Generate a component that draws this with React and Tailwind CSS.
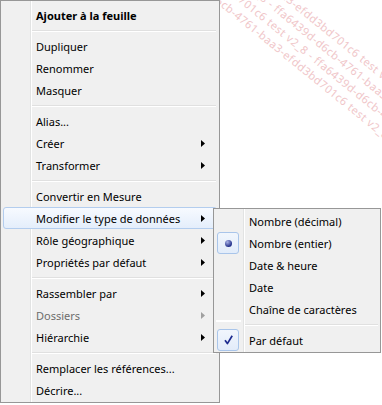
import React from 'react';

const font = { fontFamily: '"Segoe UI", "Noto Sans", sans-serif' };

const mainItems = [
  { label: 'Ajouter à la feuille', bold: true },
  { sep: true },
  { label: 'Dupliquer' },
  { label: 'Renommer' },
  { label: 'Masquer' },
  { sep: true },
  { label: 'Alias...' },
  { label: 'Créer', sub: true },
  { label: 'Transformer', sub: true },
  { sep: true },
  { label: 'Convertir en Mesure' },
  { label: 'Modifier le type de données', sub: true, active: true },
  { label: 'Rôle géographique', sub: true },
  { label: 'Propriétés par défaut', sub: true },
  { sep: true },
  { label: 'Rassembler par', sub: true },
  { label: 'Dossiers', sub: true, disabled: true },
  { label: 'Hiérarchie', sub: true },
  { sep: true },
  { label: 'Remplacer les références...' },
  { label: 'Décrire...' },
];

const subItems = [
  { label: 'Nombre (décimal)' },
  { label: 'Nombre (entier)', mark: 'radio' },
  { label: 'Date & heure' },
  { label: 'Date' },
  { label: 'Chaîne de caractères' },
  { sep: true },
  { label: 'Par défaut', mark: 'check' },
];

const Arrow = ({ disabled }) => (
  <svg width="4" height="7" viewBox="0 0 4 7" className="shrink-0">
    <polygon points="0,0 4,3.5 0,7" fill={disabled ? '#a0a0a0' : '#000'} />
  </svg>
);

const Gutter = () => (
  <div className="absolute left-[29px] top-0 bottom-0 w-[2px] border-l border-[#e2e3e3] bg-white" />
);

const MainMenu = () => (
  <div className="relative w-[220px] border border-[#979797] bg-[#f0f0f0] pt-[3px] pb-[1px]">
    <Gutter />
    {mainItems.map((it, i) =>
      it.sep ? (
        <div key={i} className="relative h-[9px] pt-[4px] pl-[31px] pr-[3px]">
          <div className="h-[2px] border-t border-[#e0e0e0] bg-white" />
        </div>
      ) : (
        <div
          key={i}
          className={
            'relative mx-[2px] flex h-[22px] items-center justify-between rounded-[3px] border pl-[32px] pr-[11px] ' +
            (it.active
              ? 'border-[#b3cdee] bg-gradient-to-b from-[#f7faff] to-[#e4eefb]'
              : 'border-transparent')
          }
        >
          <span
            className={
              (it.bold ? 'font-bold ' : '') +
              (it.disabled ? 'text-[#6d6d6d]' : 'text-black')
            }
          >
            {it.label}
          </span>
          {it.sub && <Arrow disabled={it.disabled} />}
        </div>
      )
    )}
  </div>
);

const Mark = ({ type }) => {
  if (!type) return <div className="w-[22px] shrink-0" />;
  return (
    <div className="flex h-[22px] w-[22px] shrink-0 items-center justify-center rounded-[3px] border border-[#a9c5ea] bg-gradient-to-b from-[#f1f6fd] to-[#e2ecfa]">
      {type === 'radio' ? (
        <div className="h-[7px] w-[7px] rounded-full bg-[radial-gradient(circle_at_35%_30%,#aab3e6,#23308a_70%)]" />
      ) : (
        <svg width="9" height="10" viewBox="0 0 9 10">
          <path d="M1 5.2 L3.4 8.6 L8.2 0.8" fill="none" stroke="#1d2b8f" strokeWidth="1.7" strokeLinejoin="round" />
        </svg>
      )}
    </div>
  );
};

const SubMenu = () => (
  <div className="absolute left-[213px] top-[208px] w-[168px] border border-[#979797] bg-[#f0f0f0] py-[1px]">
    <Gutter />
    {subItems.map((it, i) =>
      it.sep ? (
        <div key={i} className="relative flex h-[9px]">
          <div className="ml-[2px] h-[2px] w-[25px] bg-white" />
          <div className="ml-[4px] mr-[2px] mt-[4px] h-[2px] flex-1 border-t border-[#e0e0e0] bg-white" />
        </div>
      ) : (
        <div key={i} className="relative mx-[2px] flex h-[22px] items-center border border-transparent">
          <Mark type={it.mark} />
          <span className="ml-[10px] text-black">{it.label}</span>
        </div>
      )
    )}
  </div>
);

// faint diagonal watermark in the top-right corner
const Watermark = () => (
  <div className="pointer-events-none absolute left-[266px] top-[-30px] origin-top-left rotate-[39deg] text-[11px] leading-[15px] tracking-[0.5px] text-[#f0c6c9]">
    <div className="-ml-[10px] whitespace-nowrap">701-baa3-efdd3bd701c6 test v2_8 - ffa6439d-d6cb</div>
    <div className="-ml-[40px] whitespace-nowrap">6 test v2_8 - ffa6439d-d6cb-4761-baa3-efdd3bd701c6</div>
    <div className="-ml-[60px] whitespace-nowrap">e-efdd3bd701c6 test v2_8 - ffa6439d-d6cb-4761-baa3</div>
    <div className="-ml-[45px] whitespace-nowrap">9d-d6cb-4761-baa3-efdd3bd701c6 test v2_8</div>
  </div>
);

export default function App() {
  return (
    <div className="relative h-[405px] w-[382px] overflow-hidden bg-white text-[11px] leading-none" style={font}>
      <Watermark />
      <MainMenu />
      <SubMenu />
    </div>
  );
}
